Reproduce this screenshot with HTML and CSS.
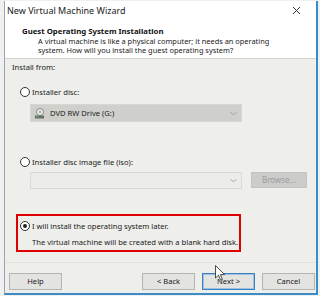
FILE: index.html
```html
<!DOCTYPE html>
<html lang="en">
<head>
    <meta charset="UTF-8">
    <title>New Virtual Machine Wizard</title>
    <link rel="stylesheet" href="styles.css">
</head>
<body>
    <div class="wizard">
        <div class="titlebar">
            <span class="title">New Virtual Machine Wizard</span>
            <svg class="close" width="9" height="9" viewBox="0 0 9 9"><path d="M1 1L8 8M8 1L1 8" stroke="#333" stroke-width="1" fill="none"/></svg>
        </div>

        <div class="header">
            <div class="heading">Guest Operating System Installation</div>
            <div class="desc">A virtual machine is like a physical computer; it needs an operating</div>
            <div class="desc">system. How will you install the guest operating system?</div>
        </div>

        <div class="content">
            <div class="label">Install from:</div>

            <div class="option opt-disc"><span class="radio"></span>Installer disc:</div>
            <div class="combo combo-disc">
                <svg class="disc-icon" width="11" height="11" viewBox="0 0 11 11">
                    <circle cx="6" cy="4" r="3.5" fill="#e8e8e8" stroke="#7a7a7a" stroke-width="0.8"/>
                    <circle cx="6" cy="4" r="1" fill="#9a9a9a"/>
                    <rect x="1" y="7.5" width="9" height="3" fill="#6a6a6a"/>
                    <rect x="2" y="8.5" width="3" height="1" fill="#3fbf4f"/>
                </svg>
                <span class="combo-text">DVD RW Drive (G:)</span>
                <svg class="arrow" width="7" height="5" viewBox="0 0 7 5"><path d="M0.5 1L3.5 4L6.5 1" stroke="#a0a0a0" fill="none"/></svg>
            </div>

            <div class="option opt-iso"><span class="radio"></span>Installer disc image file (iso):</div>
            <div class="iso-row">
                <div class="combo combo-iso">
                    <svg class="arrow" width="7" height="5" viewBox="0 0 7 5"><path d="M0.5 1L3.5 4L6.5 1" stroke="#a8a8a8" fill="none"/></svg>
                </div>
                <div class="browse">Browse...</div>
            </div>

            <div class="later-box">
                <div class="option opt-later"><span class="radio on"></span>I will install the operating system later.</div>
                <div class="note">The virtual machine will be created with a blank hard disk.</div>
            </div>
        </div>

        <div class="footer">
            <div class="btn">Help</div>
            <div class="spacer"></div>
            <div class="btn">&lt; Back</div>
            <div class="btn btn-focus">Next &gt;</div>
            <div class="btn">Cancel</div>
            <svg class="pointer" width="11" height="17" viewBox="0 0 11 17">
                <path d="M0.5 0.5L0.5 13L3.5 10.2L5.6 15.2L7.4 14.4L5.4 9.6L9.6 9.6Z" fill="#fff" stroke="#222" stroke-width="0.8"/>
            </svg>
        </div>
    </div>
</body>
</html>
```

FILE: styles.css
```css
* {
    margin: 0;
    padding: 0;
    box-sizing: border-box;
}

body {
    font-family: 'Noto Sans', 'Open Sans', sans-serif;
    font-size: 7.6px;
    color: #1a1a1a;
    background: #eef0f2;
    width: 320px;
    height: 296px;
    overflow: hidden;
    white-space: nowrap;
}

.wizard {
    margin: 1px 0 0 4px;
    width: 314px;
    background: #eeeeeb;
    border-left: 1px solid #9aa4ae;
    border-right: 2px solid #3b8bc4;
    border-bottom: 2px solid #3b8bc4;
}

.titlebar {
    height: 19px;
    background: #fff;
    display: flex;
    align-items: center;
    padding: 0 0 0 2px;
}

.title {
    font-size: 9px;
    color: #222;
}

.close {
    margin-left: auto;
    margin-right: 15px;
}

.header {
    background: #fff;
    height: 39px;
    padding: 6px 0 0 17px;
    border-bottom: 1px solid #d4d4d2;
}

.heading {
    font-weight: bold;
    font-size: 7.8px;
    line-height: 10px;
    color: #111;
}

.desc {
    margin-left: 16px;
    height: 9px;
    line-height: 9px;
    font-size: 7.4px;
    color: #222;
}

.heading + .desc {
    margin-top: 1px;
}

.content {
    padding: 3px 0 0 0;
}

.label {
    line-height: 10px;
    padding-left: 7px;
}

.option {
    display: flex;
    align-items: center;
    height: 12px;
    line-height: 12px;
}

.radio {
    width: 10px;
    height: 10px;
    border: 1px solid #333;
    border-radius: 50%;
    background: #fff;
    margin-right: 2px;
    position: relative;
}

.radio.on::after {
    content: '';
    position: absolute;
    left: 2px;
    top: 2px;
    width: 4px;
    height: 4px;
    border-radius: 50%;
    background: #222;
}

.opt-disc {
    margin: 14px 0 0 15px;
}

.combo {
    width: 212px;
    display: flex;
    align-items: center;
}

.combo-disc {
    margin: 6px 0 0 25px;
    height: 18px;
    background: #cfcfcc;
    border: 1px solid #d6d6d3;
    padding-left: 3px;
}

.disc-icon {
    margin-right: 5px;
}

.combo-text {
    color: #222;
}

.arrow {
    margin-left: auto;
    margin-right: 4px;
}

.opt-iso {
    margin: 34px 0 0 15px;
}

.iso-row {
    display: flex;
    margin: 4px 0 0 25px;
}

.combo-iso {
    height: 17px;
    background: #ececea;
    border: 1px solid #d9d9d6;
}

.browse {
    margin-left: 9px;
    width: 56px;
    height: 16px;
    background: #cccccb;
    border: 1px solid #c4c4c2;
    color: #9c9c9c;
    font-size: 8px;
    text-align: center;
    line-height: 14px;
}

.later-box {
    margin: 25px 0 0 11px;
    width: 225px;
    height: 38px;
    border: 2px solid #e00000;
    padding: 4px 0 0 2px;
}

.note {
    margin: 5px 0 0 12px;
    line-height: 10px;
    color: #222;
}

.footer {
    position: relative;
    display: flex;
    gap: 7px;
    margin-top: 10px;
    border-top: 1px solid #e2e2df;
    padding: 10px 1px 3px 4px;
}

.spacer {
    flex: 1;
}

.btn {
    width: 53px;
    height: 17px;
    background: #e3e3e1;
    border: 1px solid #b4b4b2;
    text-align: center;
    line-height: 15px;
    color: #222;
}

.btn-focus {
    border: 1px solid #3c7fc0;
    box-shadow: inset 0 0 0 1px #9cc3e6;
}

.pointer {
    position: absolute;
    left: 210px;
    top: 2px;
}
```
